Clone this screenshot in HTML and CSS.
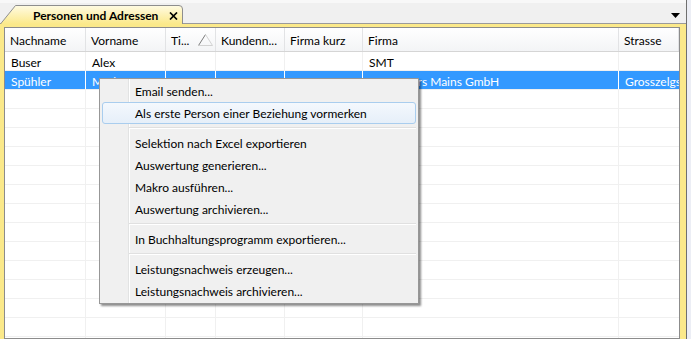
FILE: index.html
```html
<!DOCTYPE html>
<html>
<head>
    <title>Personen und Adressen</title>
    <link rel="stylesheet" href="styles.css">
</head>
<body>
    <div class="window">
        <div class="tabstrip">
            <div class="tab">
                <svg class="tab-shape" width="184" height="19" viewBox="0 0 184 19">
                    <defs>
                        <linearGradient id="tabFill" x1="0" y1="0" x2="0" y2="1">
                            <stop offset="0" stop-color="#fffbe3"/>
                            <stop offset="1" stop-color="#fbe98a"/>
                        </linearGradient>
                    </defs>
                    <path d="M0.5 19 L15.5 0.5 L179 0.5 Q182.5 0.5 182.5 4 L182.5 19" fill="url(#tabFill)" stroke="#8e8e8e"/>
                </svg>
                <span class="tab-label">Personen und Adressen</span>
                <svg class="tab-close" width="9" height="8" viewBox="0 0 9 8">
                    <path d="M1 0.5 L8 7.5 M8 0.5 L1 7.5" stroke="#000" stroke-width="1.7"/>
                </svg>
            </div>
            <svg class="tab-menu" width="9" height="5" viewBox="0 0 9 5">
                <path d="M0 0 L9 0 L4.5 5 Z" fill="#000"/>
            </svg>
        </div>

        <div class="frame">
            <div class="grid">
                <div class="row head">
                    <div class="cell">Nachname</div>
                    <div class="cell">Vorname</div>
                    <div class="cell sorted">Ti...
                        <svg class="sort" width="15" height="12" viewBox="0 0 15 12">
                            <path d="M0.5 11.5 L7.5 0.5" stroke="#7a7a7a" fill="none"/>
                            <path d="M7.5 0.5 L14.5 11.5 L0.5 11.5" stroke="#d2d2d2" fill="none"/>
                        </svg>
                    </div>
                    <div class="cell">Kundenn...</div>
                    <div class="cell">Firma kurz</div>
                    <div class="cell">Firma</div>
                    <div class="cell">Strasse</div>
                </div>
                <div class="row">
                    <div class="cell">Buser</div>
                    <div class="cell">Alex</div>
                    <div class="cell"></div>
                    <div class="cell"></div>
                    <div class="cell"></div>
                    <div class="cell">SMT</div>
                    <div class="cell"></div>
                </div>
                <div class="row selected">
                    <div class="cell">Spühler</div>
                    <div class="cell">Markus</div>
                    <div class="cell"></div>
                    <div class="cell"></div>
                    <div class="cell"></div>
                    <div class="cell">Computers Mains GmbH</div>
                    <div class="cell">Grosszelgstrasse 5</div>
                </div>
                <div class="row"><div class="cell"></div><div class="cell"></div><div class="cell"></div><div class="cell"></div><div class="cell"></div><div class="cell"></div><div class="cell"></div></div>
                <div class="row"><div class="cell"></div><div class="cell"></div><div class="cell"></div><div class="cell"></div><div class="cell"></div><div class="cell"></div><div class="cell"></div></div>
                <div class="row"><div class="cell"></div><div class="cell"></div><div class="cell"></div><div class="cell"></div><div class="cell"></div><div class="cell"></div><div class="cell"></div></div>
                <div class="row"><div class="cell"></div><div class="cell"></div><div class="cell"></div><div class="cell"></div><div class="cell"></div><div class="cell"></div><div class="cell"></div></div>
                <div class="row"><div class="cell"></div><div class="cell"></div><div class="cell"></div><div class="cell"></div><div class="cell"></div><div class="cell"></div><div class="cell"></div></div>
                <div class="row"><div class="cell"></div><div class="cell"></div><div class="cell"></div><div class="cell"></div><div class="cell"></div><div class="cell"></div><div class="cell"></div></div>
                <div class="row"><div class="cell"></div><div class="cell"></div><div class="cell"></div><div class="cell"></div><div class="cell"></div><div class="cell"></div><div class="cell"></div></div>
                <div class="row"><div class="cell"></div><div class="cell"></div><div class="cell"></div><div class="cell"></div><div class="cell"></div><div class="cell"></div><div class="cell"></div></div>
                <div class="row"><div class="cell"></div><div class="cell"></div><div class="cell"></div><div class="cell"></div><div class="cell"></div><div class="cell"></div><div class="cell"></div></div>
                <div class="row"><div class="cell"></div><div class="cell"></div><div class="cell"></div><div class="cell"></div><div class="cell"></div><div class="cell"></div><div class="cell"></div></div>
                <div class="row"><div class="cell"></div><div class="cell"></div><div class="cell"></div><div class="cell"></div><div class="cell"></div><div class="cell"></div><div class="cell"></div></div>
                <div class="row"><div class="cell"></div><div class="cell"></div><div class="cell"></div><div class="cell"></div><div class="cell"></div><div class="cell"></div><div class="cell"></div></div>
                <div class="row"><div class="cell"></div><div class="cell"></div><div class="cell"></div><div class="cell"></div><div class="cell"></div><div class="cell"></div><div class="cell"></div></div>
                <div class="row"><div class="cell"></div><div class="cell"></div><div class="cell"></div><div class="cell"></div><div class="cell"></div><div class="cell"></div><div class="cell"></div></div>
            </div>
        </div>

        <div class="context-menu">
            <div class="menu-item">Email senden...</div>
            <div class="menu-item active">Als erste Person einer Beziehung vormerken</div>
            <div class="menu-sep"></div>
            <div class="menu-item">Selektion nach Excel exportieren</div>
            <div class="menu-item">Auswertung generieren...</div>
            <div class="menu-item">Makro ausführen...</div>
            <div class="menu-item">Auswertung archivieren...</div>
            <div class="menu-sep"></div>
            <div class="menu-item">In Buchhaltungsprogramm exportieren...</div>
            <div class="menu-sep"></div>
            <div class="menu-item">Leistungsnachweis erzeugen...</div>
            <div class="menu-item">Leistungsnachweis archivieren...</div>
        </div>
    </div>
</body>
</html>
```

FILE: styles.css
```css
* {
    margin: 0;
    padding: 0;
    box-sizing: border-box;
}
body {
    font-family: 'Lato', 'Liberation Sans', sans-serif;
    font-size: 12px;
    color: #000;
    background: #eceef5;
}
.window {
    position: relative;
    width: 687px;
    height: 339px;
    overflow: hidden;
    border-right: 1px solid #6f6f6f;
}

/* tab strip */
.tabstrip {
    display: flex;
    align-items: flex-end;
    justify-content: space-between;
    height: 24px;
    background: #f0f0f0;
    border-top: 3px solid #f8f8f8;
    border-bottom: 1px solid #9a9a9a;
    padding-right: 6px;
}
.tab {
    position: relative;
    display: flex;
    align-items: center;
    width: 184px;
    height: 19px;
    margin-bottom: -1px;
    padding-left: 33px;
}
.tab-shape {
    position: absolute;
    left: 0;
    top: 0;
}
.tab-label {
    position: relative;
    font-weight: bold;
    padding-top: 1px;
}
.tab-close {
    position: relative;
    margin-left: auto;
    margin-right: 6px;
    margin-top: 2px;
}
.tab-menu {
    align-self: center;
    margin-top: 4px;
}

/* grid */
.frame {
    background: #fbe98a;
    padding: 3px 6px 0 4px;
    height: 315px;
}
.grid {
    background: #fff;
    border: 1px solid #8c8c8c;
    height: 100%;
    overflow: hidden;
}
.row {
    display: grid;
    grid-template-columns: 81px 80px 50px 69px 78px 256px 1fr;
    height: 19px;
    border-bottom: 1px solid #f0f0f0;
}
.cell {
    border-right: 1px solid #f0f0f0;
    padding: 3px 0 0 6px;
    white-space: nowrap;
    overflow: hidden;
}
.cell:last-child {
    border-right: none;
}
.head {
    height: 24px;
    background: linear-gradient(#ffffff, #f3f4f6);
    border-bottom: 1px solid #d5d5d5;
}
.head .cell {
    border-right: 1px solid #e2e3e5;
    padding: 5px 0 0 5px;
}
.sorted {
    display: flex;
}
.sort {
    margin: 1px 0 0 9px;
}
.selected {
    background: #3399ff;
    color: #fff;
}
.selected .cell {
    border-right-color: #fff;
}

/* context menu */
.context-menu {
    position: absolute;
    left: 99px;
    top: 78px;
    width: 320px;
    padding: 1px 2px;
    border: 1px solid #979797;
    background: linear-gradient(to right, #f0f0f0 28px, #e2e3e3 28px, #e2e3e3 29px, #fff 29px, #fff 30px, #f0f0f0 30px);
    box-shadow: 2px 2px 2px rgba(0, 0, 0, 0.45);
}
.menu-item {
    height: 22px;
    padding: 3px 0 0 32px;
    border: 1px solid transparent;
    border-radius: 3px;
}
.menu-item.active {
    border-color: #a9cdee;
    background: linear-gradient(#f4f8fd, #e6eff9);
}
.menu-sep {
    height: 8px;
    margin-left: 27px;
    border-top: 3px solid transparent;
}
.menu-sep::before {
    content: "";
    display: block;
    height: 1px;
    background: #e0e0e0;
    border-bottom: 1px solid #fff;
    box-sizing: content-box;
}
```
